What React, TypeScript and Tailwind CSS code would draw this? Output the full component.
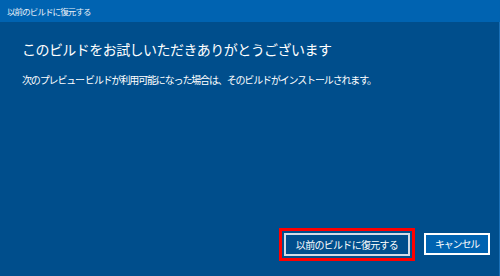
export default function App() {
  const font = { fontFamily: '"Noto Sans CJK JP", "Noto Sans", sans-serif' };

  return (
    <div className="flex h-[276px] w-[500px] flex-col bg-[#004e8c] text-white" style={font}>
      {/* Title bar */}
      <div className="flex h-[22px] shrink-0 items-center bg-[#0063b1] pl-[7px]">
        <span className="text-[8.5px] leading-none tracking-[-0.9px] text-[#e8f0f8]">以前のビルドに復元する</span>
      </div>

      {/* Content */}
      <div className="flex flex-1 flex-col border-r border-[#1a6fb5] pl-[22px]">
        <h1 className="mt-[17px] text-[14px] leading-[20px] font-normal tracking-[-0.55px]">
          このビルドをお試しいただきありがとうございます
        </h1>
        <p className="mt-[14px] text-[10px] leading-[14px] tracking-[-1.15px]">
          次のプレビュー ビルドが利用可能になった場合は、そのビルドがインストールされます。
        </p>

        <div className="mt-auto flex justify-end gap-[14px] pr-[9px] pb-[20px]">
          <button className="h-[23px] w-[126px] border-2 border-[#d4dbe6] bg-[#004e8c] text-[10px] leading-none tracking-[-0.7px] text-white outline-[3px] outline-offset-2 outline-[#ff0000] outline-solid">
            以前のビルドに復元する
          </button>
          <button className="h-[22px] w-[66px] border-2 border-white bg-[#0063b1] text-[10px] leading-none tracking-[-1.2px] text-white">
            キャンセル
          </button>
        </div>
      </div>
    </div>
  );
}
